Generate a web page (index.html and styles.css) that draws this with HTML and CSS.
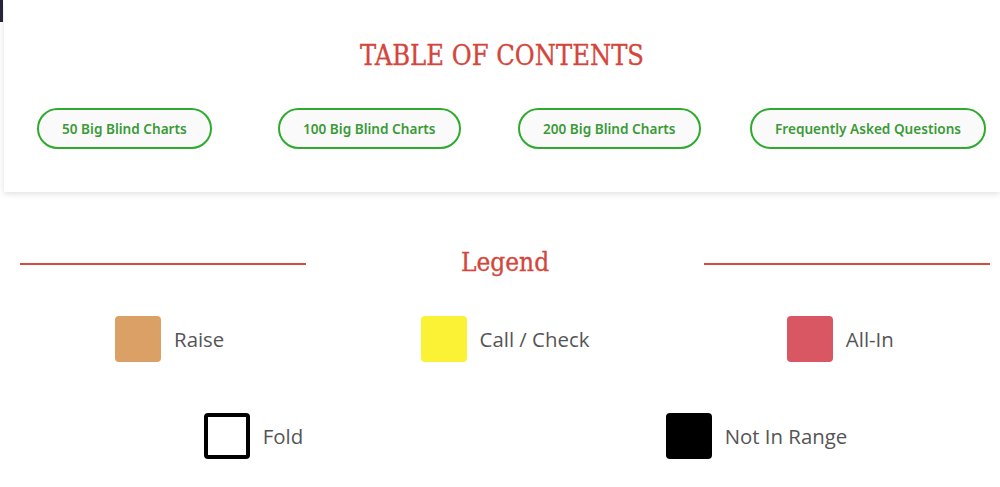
FILE: index.html
```html
<!DOCTYPE html>
<html lang="en">

<head>
    <meta charset="UTF-8">
    <meta name="viewport" content="width=device-width, initial-scale=1.0">
    <title>Big Blind Charts</title>
    <link rel="stylesheet" href="styles.css">
</head>

<body>
    <div class="side-tab"></div>
    <section class="toc">
        <h2 class="toc-title">TABLE OF CONTENTS</h2>
        <nav class="toc-links">
            <a class="pill" href="#bb50">50 Big Blind Charts</a>
            <a class="pill" href="#bb100">100 Big Blind Charts</a>
            <a class="pill" href="#bb200">200 Big Blind Charts</a>
            <a class="pill" href="#faq">Frequently Asked Questions</a>
        </nav>
    </section>

    <main class="legend">
        <div class="legend-head">
            <hr class="rule">
            <h3>Legend</h3>
            <hr class="rule">
        </div>

        <div class="legend-row three">
            <div class="key"><span class="swatch raise"></span>Raise</div>
            <div class="key"><span class="swatch call"></span>Call / Check</div>
            <div class="key"><span class="swatch allin"></span>All-In</div>
        </div>
        <div class="legend-row two">
            <div class="key"><span class="swatch fold"></span>Fold</div>
            <div class="key"><span class="swatch out"></span>Not In Range</div>
        </div>
    </main>
</body>

</html>
```

FILE: styles.css
```css
html,
body {
    margin: 0px;
    background: #ffffff;
}

body {
    position: relative;
    overflow: hidden;
    height: 487px;
}

.side-tab {
    position: absolute;
    left: 0;
    top: 0;
    width: 3px;
    height: 22px;
    background: #25253a;
}

.toc {
    margin-left: 4px;
    height: 192px;
    background: #ffffff;
    box-shadow: 0px 2px 6px rgba(0, 0, 0, 0.12);
    box-sizing: border-box;
    padding-top: 38px;
}

.toc-title {
    margin: 0;
    text-align: center;
    font-family: "DejaVu Serif Condensed", "DejaVu Serif", serif;
    font-weight: normal;
    font-size: 27px;
    line-height: 36px;
    color: #d4463c;
    -webkit-text-stroke: 0.3px #d4463c;
}

.toc-links {
    display: grid;
    grid-template-columns: 241px 240px 232px 1fr;
    margin-top: 34px;
    padding-left: 33px;
}

.pill {
    justify-self: start;
    display: inline-block;
    height: 41px;
    box-sizing: border-box;
    padding: 0 23px;
    border: 2.5px solid #2eaa2e;
    border-radius: 21px;
    background: #fafafa;
    color: #3a9a38;
    font-family: "Noto Sans", sans-serif;
    font-weight: 600;
    font-size: 13.6px;
    line-height: 37px;
    text-decoration: none;
}

.legend-head {
    display: flex;
    align-items: center;
    margin-top: 52px;
    padding: 0 10px 0 20px;
}

.rule {
    flex: 1;
    margin: 4px 0 0 0;
    border: none;
    height: 2px;
    background: #d6493f;
}

.legend-head h3 {
    width: 398px;
    margin: 0;
    text-align: center;
    font-family: "DejaVu Serif Condensed", "DejaVu Serif", serif;
    font-weight: normal;
    font-size: 26px;
    line-height: 36px;
    color: #d4463c;
    -webkit-text-stroke: 0.3px #d4463c;
}

.legend-row {
    display: grid;
    width: 1006px;
    margin-left: 2px;
}

.legend-row.three {
    grid-template-columns: 1fr 1fr 1fr;
    margin-top: 36px;
}

.legend-row.two {
    grid-template-columns: 1fr 1fr;
    margin-top: 51px;
}

.key {
    display: flex;
    align-items: center;
    justify-content: center;
    gap: 13px;
    font-family: "Open Sans", sans-serif;
    font-size: 20.4px;
    color: #555555;
}

.swatch {
    width: 46px;
    height: 46px;
    border-radius: 4px;
    box-sizing: border-box;
}

.raise {
    background: #daa066;
}

.call {
    background: #fbf236;
}

.allin {
    background: #d95763;
}

.fold {
    border: 4px solid #000000;
    background: #ffffff;
}

.out {
    background: #000000;
}
```
